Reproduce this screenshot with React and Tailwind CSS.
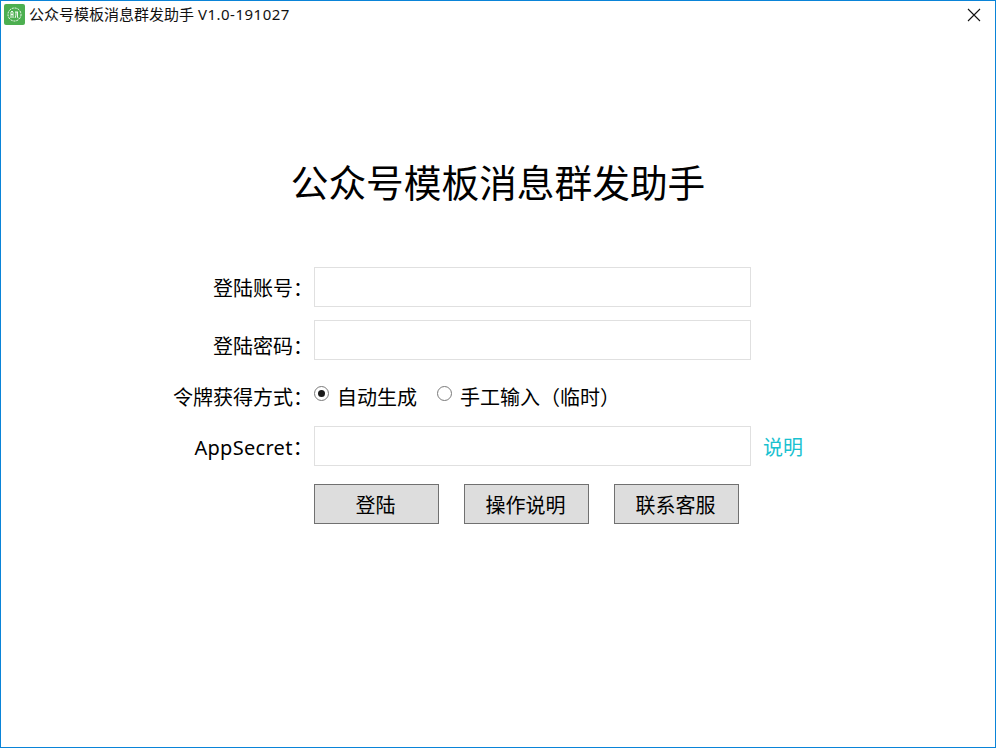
import React from 'react';

const font = { fontFamily: '"Noto Sans", "Noto Sans CJK SC", sans-serif' };

const Field = ({ label, labelClass = '', children }) => (
  <div className="flex items-center h-10">
    <span className={`w-[312px] text-right text-[20px] leading-none text-black whitespace-nowrap ${labelClass}`}>{label}</span>
    <span className="w-px" />
    {children}
  </div>
);

const TextBox = () => (
  <input className="w-[437px] h-10 border border-[#e0e0e0] bg-white outline-none" />
);

const Radio = ({ checked }) => (
  <span className="w-[15px] h-[15px] translate-y-px rounded-full border border-[#7a7a7a] bg-white flex items-center justify-center shrink-0">
    {checked && <span className="w-[7px] h-[7px] rounded-full bg-[#1a1a1a]" />}
  </span>
);

const Btn = ({ children }) => (
  <button className="w-[125px] h-10 border border-[#707070] bg-[#dddddd] text-[20px] leading-none text-black pt-[3px] pr-[2px]">
    {children}
  </button>
);

export default function App() {
  return (
    <div style={font} className="w-[996px] h-[748px] border border-[#0a84d8] bg-white flex flex-col overflow-hidden">
      <div className="h-[29px] flex items-center shrink-0">
        <svg width="21" height="21" viewBox="0 0 21 21" className="ml-[3px] mt-[-2px]">
          <rect width="21" height="21" rx="2" fill="#4caf50" />
          <circle cx="10.5" cy="10.5" r="6.5" fill="none" stroke="#fff" strokeWidth="1" strokeDasharray="2 1" />
          <path d="M7 14V8l1-1 1 1v6M7 10.5h2M11 8h3M12 8c0 3-.3 5-1 6M13.5 8v5c0 1 .5 1 1 1" fill="none" stroke="#fff" strokeWidth="0.9" />
        </svg>
        <span className="ml-[4px] text-[15px] leading-none text-[#111] whitespace-nowrap mt-[-3px]">
          公众号模板消息群发助手 <span className="tracking-[0.5px]">V1.0-191027</span>
        </span>
        <svg width="14" height="14" viewBox="0 0 14 14" className="ml-auto mr-[14px] mt-[-2px]">
          <path d="M1 1l12 12M13 1L1 13" stroke="#111" strokeWidth="1.1" fill="none" />
        </svg>
      </div>

      <h1 className="mt-[123px] text-center text-[37.7px] leading-[60px] font-normal text-black">公众号模板消息群发助手</h1>

      <div className="mt-[54px] flex flex-col">
        <Field label="登陆账号：" labelClass="pt-[4px]"><TextBox /></Field>
        <div className="mt-[13px]">
          <Field label="登陆密码：" labelClass="pt-[13px]"><TextBox /></Field>
        </div>
        <div className="mt-[17px] h-[33px] flex items-center">
          <span className="w-[312px] text-right text-[20px] leading-none text-black whitespace-nowrap pt-[8px]">令牌获得方式：</span>
          <span className="w-px" />
          <span className="flex items-center text-[20px] leading-none text-black whitespace-nowrap mt-[-2px]">
            <Radio checked />
            <span className="ml-[8px] mt-[10px]">自动生成</span>
            <span className="ml-[20px]"><Radio /></span>
            <span className="ml-[8px] mt-[10px]">手工输入（临时）</span>
          </span>
        </div>
        <div className="mt-[16px]">
          <Field label="AppSecret：" labelClass="pt-[4px] tracking-[0.3px]">
            <TextBox />
            <span className="ml-[12px] text-[20px] leading-none text-[#19c1d0] pt-[4px]">说明</span>
          </Field>
        </div>
        <div className="mt-[18px] ml-[313px] flex gap-[25px]">
          <Btn>登陆</Btn>
          <Btn>操作说明</Btn>
          <Btn>联系客服</Btn>
        </div>
      </div>
    </div>
  );
}
